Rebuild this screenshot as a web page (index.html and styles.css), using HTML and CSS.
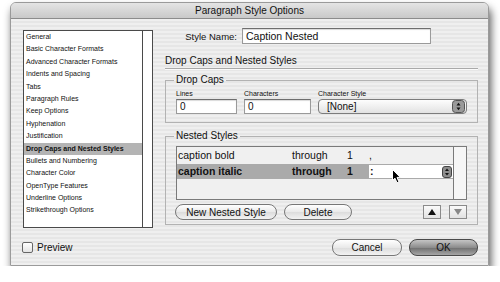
FILE: index.html
```html
<!DOCTYPE html>
<html lang="en">
<head>
  <meta charset="UTF-8">
  <meta name="viewport" content="width=device-width, initial-scale=1.0">
  <title>Paragraph Style Options</title>
  <link rel="stylesheet" href="styles.css">
</head>
<body>
  <div class="window">
    <div class="titlebar">Paragraph Style Options</div>

    <div class="body">
      <div class="categories">
        <ul class="cat-items">
          <li>General</li>
          <li>Basic Character Formats</li>
          <li>Advanced Character Formats</li>
          <li>Indents and Spacing</li>
          <li>Tabs</li>
          <li>Paragraph Rules</li>
          <li>Keep Options</li>
          <li>Hyphenation</li>
          <li>Justification</li>
          <li class="selected">Drop Caps and Nested Styles</li>
          <li>Bullets and Numbering</li>
          <li>Character Color</li>
          <li>OpenType Features</li>
          <li>Underline Options</li>
          <li>Strikethrough Options</li>
        </ul>
        <div class="scroll"></div>
      </div>

      <div class="panel">
        <div class="name-row">
          <label class="name-label">Style Name:</label>
          <div class="field name-field">Caption Nested</div>
        </div>

        <h2 class="section-title">Drop Caps and Nested Styles</h2>

        <fieldset class="group drop-caps">
          <legend>Drop Caps</legend>
          <div class="caps-grid">
            <div class="caps-col">
              <span class="small-label">Lines</span>
              <div class="field">0</div>
            </div>
            <div class="caps-col">
              <span class="small-label">Characters</span>
              <div class="field">0</div>
            </div>
            <div class="caps-col">
              <span class="small-label">Character Style</span>
              <div class="popup">
                <span>[None]</span>
                <svg class="popup-arrows" width="13" height="13" viewBox="0 0 13 13">
                  <rect x="0.5" y="0.5" width="12" height="12" rx="3" fill="#9a9a9a" stroke="#555"/>
                  <path d="M4.5 5.5 L6.5 2.8 L8.5 5.5 Z M4.5 7.5 L6.5 10.2 L8.5 7.5 Z" fill="#111"/>
                </svg>
              </div>
            </div>
          </div>
        </fieldset>

        <fieldset class="group nested">
          <legend>Nested Styles</legend>
          <div class="nested-list">
            <div class="rows">
              <div class="row">
                <span class="c-style">caption bold</span>
                <span class="c-through">through</span>
                <span class="c-num">1</span>
                <span class="c-delim">,</span>
              </div>
              <div class="row selected">
                <span class="c-style">caption italic</span>
                <span class="c-through">through</span>
                <span class="c-num">1</span>
                <span class="delim-field">
                  <span>:</span>
                  <svg class="mini-arrows" width="10" height="12" viewBox="0 0 10 12">
                    <rect x="0.5" y="0.5" width="9" height="11" rx="2.5" fill="#8e8e8e" stroke="#444"/>
                    <path d="M3 5 L5 2.5 L7 5 Z M3 7 L5 9.5 L7 7 Z" fill="#111"/>
                  </svg>
                </span>
              </div>
            </div>
            <div class="scroll"></div>
            <svg class="cursor" width="9" height="15" viewBox="0 0 9 15">
              <path d="M0.5 0.5 L0.5 11.5 L3 9.2 L5 13.8 L7 13 L5 8.4 L8.3 8.4 Z" fill="#000" stroke="#fff" stroke-width="1"/>
            </svg>
          </div>
          <div class="nested-buttons">
            <button class="btn new-btn">New Nested Style</button>
            <button class="btn delete-btn">Delete</button>
            <span class="spacer"></span>
            <button class="arrow-btn">
              <svg width="8" height="6" viewBox="0 0 8 6"><path d="M0 6 L4 0 L8 6 Z" fill="#111"/></svg>
            </button>
            <button class="arrow-btn">
              <svg width="8" height="6" viewBox="0 0 8 6"><path d="M0 0 L4 6 L8 0 Z" fill="#888"/></svg>
            </button>
          </div>
        </fieldset>
      </div>
    </div>

    <div class="footer">
      <label class="preview"><span class="checkbox"></span>Preview</label>
      <span class="spacer"></span>
      <button class="btn cancel-btn">Cancel</button>
      <button class="btn ok-btn">OK</button>
    </div>
  </div>
</body>
</html>
```

FILE: styles.css
```css
body {
  margin: 0;
  background: #fff;
  font-family: "Liberation Sans", Arial, sans-serif;
  color: #111;
}

.window {
  width: 477px;
  height: 262px;
  margin: 2px 0 0 10px;
  border: 1px solid #9a9a9a;
  border-radius: 6px 6px 0 0;
  background: repeating-linear-gradient(to bottom, #efefef 0, #efefef 2px, #e6e6e6 2px, #e6e6e6 4px);
  box-shadow: 2px 6px 9px rgba(0, 0, 0, 0.65);
  display: flex;
  flex-direction: column;
}

.titlebar {
  height: 15px;
  line-height: 15px;
  text-align: center;
  font-size: 10px;
  color: #111;
  background: linear-gradient(#e4e4e4, #c9c9c9);
  border-bottom: 1px solid #8c8c8c;
  border-radius: 5px 5px 0 0;
}

.body {
  display: grid;
  grid-template-columns: 130px 313px;
  column-gap: 12px;
  align-items: start;
  padding: 9px 0 0 12px;
}

/* left category list */
.categories {
  margin-top: 2px;
  height: 196px;
  border: 1px solid #4a4a4a;
  background: #fff;
  display: flex;
}

.cat-items {
  list-style: none;
  margin: 0;
  padding: 0;
  flex: 1;
}

.cat-items li {
  font-size: 7px;
  line-height: 12.4px;
  height: 12.4px;
  padding-left: 2px;
  white-space: nowrap;
}

.cat-items li.selected {
  background: #b4b4b4;
  font-weight: bold;
}

.scroll {
  width: 9px;
  border-left: 1px solid #4a4a4a;
  background: #fff;
}

/* right panel */
.panel {
  display: flex;
  flex-direction: column;
}

.name-row {
  display: flex;
  align-items: center;
  height: 16px;
}

.name-label {
  width: 72px;
  text-align: right;
  font-size: 9.5px;
}

.field {
  height: 15px;
  box-sizing: border-box;
  background: #fff;
  border: 1px solid #9a9a9a;
  border-top-color: #6e6e6e;
  box-shadow: inset 0 1px 1px rgba(0, 0, 0, 0.15);
  font-size: 10px;
  line-height: 13px;
  padding-left: 3px;
}

.name-field {
  width: 189px;
  height: 16px;
  margin-left: 5px;
  font-size: 10.5px;
  line-height: 14px;
}

.section-title {
  margin: 10px 0 0;
  font-size: 10px;
  font-weight: normal;
  line-height: 14px;
  border-bottom: 1px solid #a9a9a9;
  box-shadow: 0 1px 0 #fafafa;
}

.group {
  margin: 0;
  padding: 0 10px 8px;
  border: 1px solid #b2b2b2;
  min-width: 0;
}

.group legend {
  font-size: 10px;
  line-height: 12px;
  padding: 0 2px;
  margin-left: -2px;
}

.drop-caps {
  margin-top: 5px;
}

.caps-grid {
  display: grid;
  grid-template-columns: 61px 67px 149px;
  column-gap: 7px;
  margin-top: 3px;
}

.caps-col {
  display: flex;
  flex-direction: column;
}

.small-label {
  font-size: 7px;
  line-height: 10px;
}

.popup {
  height: 15px;
  box-sizing: border-box;
  border: 1px solid #7c7c7c;
  border-radius: 4px;
  background: linear-gradient(#fdfdfd, #e2e2e2);
  display: flex;
  align-items: center;
  justify-content: space-between;
  padding: 0 1px 0 8px;
  font-size: 10px;
}

/* nested styles */
.nested {
  margin-top: 7px;
  padding-bottom: 4px;
}

.nested-list {
  position: relative;
  margin-top: 4px;
  height: 52px;
  border: 1px solid #7a7a7a;
  background: #f0f0f0;
  display: flex;
}

.rows {
  flex: 1;
  padding-top: 1px;
}

.row {
  display: flex;
  height: 15px;
  line-height: 15px;
  font-size: 10.5px;
  padding-left: 1px;
}

.row.selected {
  margin-top: 1px;
  background: #aaaaaa;
  font-weight: bold;
}

.c-style {
  width: 114px;
}

.c-through {
  width: 55px;
}

.c-num {
  width: 22px;
}

.delim-field {
  flex: 1;
  margin: 1px 0;
  height: 13px;
  background: #fff;
  display: flex;
  align-items: center;
  justify-content: space-between;
  line-height: 13px;
  padding: 0 1px;
}

.nested-list .scroll {
  width: 12px;
  border-left: 1px solid #7a7a7a;
  background: #f6f6f6;
}

.cursor {
  position: absolute;
  left: 215px;
  top: 22px;
}

.nested-buttons {
  display: flex;
  align-items: center;
  margin-top: 4px;
  margin-left: -1px;
}

.spacer {
  flex: 1;
}

.btn {
  height: 16px;
  padding: 0;
  border: 1px solid #777;
  border-radius: 8px;
  background: linear-gradient(#ffffff, #e9e9e9 50%, #dcdcdc 51%, #f2f2f2);
  font-family: "Liberation Sans", Arial, sans-serif;
  font-size: 10px;
  color: #111;
}

.new-btn {
  width: 102px;
}

.delete-btn {
  width: 68px;
  margin-left: 7px;
}

.arrow-btn {
  width: 18px;
  height: 14px;
  padding: 0;
  margin-left: 8px;
  border: 1px solid #8a8a8a;
  background: linear-gradient(#fafafa, #e2e2e2);
  display: flex;
  align-items: center;
  justify-content: center;
}

/* footer */
.footer {
  display: flex;
  align-items: center;
  margin-top: 11px;
  padding: 0 10px 0 11px;
}

.preview {
  display: flex;
  align-items: center;
  font-size: 10px;
}

.checkbox {
  width: 9px;
  height: 9px;
  border: 1px solid #666;
  border-radius: 2px;
  background: linear-gradient(#ffffff, #e4e4e4);
  margin-right: 4px;
}

.cancel-btn {
  width: 70px;
  height: 17px;
}

.ok-btn {
  width: 69px;
  height: 17px;
  margin-left: 7px;
  border-color: #4a4a4a;
  background: linear-gradient(#c4c4c4, #8c8c8c 50%, #6e6e6e 51%, #a6a6a6);
}
```
